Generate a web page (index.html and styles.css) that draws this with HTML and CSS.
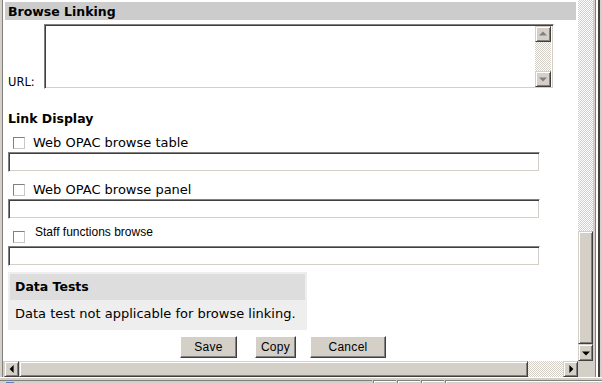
FILE: index.html
```html
<!DOCTYPE html>
<html lang="en">
<head>
    <meta charset="UTF-8">
    <title>Browse Linking</title>
    <link rel="stylesheet" href="styles.css">
</head>
<body>
    <div class="window">
        <div class="pane">
            <div class="viewport">
                <form class="page">
                    <h2 class="section-head">Browse Linking</h2>

                    <div class="url-row">
                        <label class="url-label" for="url">URL:</label>
                        <div class="url-box">
                            <textarea id="url" name="url"></textarea>
                            <div class="mini-scroll">
                                <span class="arrow-btn up disabled"></span>
                                <span class="checker"></span>
                                <span class="arrow-btn down disabled"></span>
                            </div>
                        </div>
                    </div>

                    <h3 class="sub-head">Link Display</h3>

                    <div class="option">
                        <label class="check-row">
                            <input type="checkbox" name="opac_table">
                            <span>Web OPAC browse table</span>
                        </label>
                        <input type="text" class="field" name="opac_table_text">
                    </div>

                    <div class="option">
                        <label class="check-row">
                            <input type="checkbox" name="opac_panel">
                            <span>Web OPAC browse panel</span>
                        </label>
                        <input type="text" class="field" name="opac_panel_text">
                    </div>

                    <div class="option option-staff">
                        <label class="check-row">
                            <input type="checkbox" name="staff">
                            <span>Staff functions browse</span>
                        </label>
                        <input type="text" class="field" name="staff_text">
                    </div>

                    <div class="tests">
                        <div class="tests-head">Data Tests</div>
                        <p class="tests-body">Data test not applicable for browse linking.</p>
                    </div>

                    <div class="actions">
                        <button type="button" class="btn btn-save">Save</button>
                        <button type="button" class="btn btn-copy">Copy</button>
                        <button type="button" class="btn btn-cancel">Cancel</button>
                    </div>
                </form>

                <div class="vscroll">
                    <span class="checker"></span>
                    <span class="thumb"></span>
                    <span class="arrow-btn down"></span>
                </div>
            </div>

            <div class="hscroll">
                <span class="arrow-btn left"></span>
                <span class="thumb"></span>
                <span class="checker"></span>
                <span class="arrow-btn right"></span>
                <span class="corner"></span>
            </div>
        </div>
        <div class="frame-right"></div>
    </div>

    <div class="statusbar">
        <div class="status-main"><span class="status-icon"></span></div>
        <div class="status-cell"></div>
        <div class="status-cell"></div>
        <div class="status-cell"></div>
        <div class="status-cell status-last"></div>
    </div>
</body>
</html>
```

FILE: styles.css
```css
:root {
    --face: #d4d0c8;
    --shadow: #808080;
    --dark: #404040;
    --text: #000;
}

* {
    margin: 0;
    padding: 0;
    box-sizing: border-box;
}

body {
    width: 602px;
    height: 383px;
    overflow: hidden;
    background: #fff;
    font-family: "DejaVu Sans", Verdana, sans-serif;
    font-size: 13px;
    color: var(--text);
}

/* Window frame */
.window {
    display: flex;
    height: 377px;
    padding-left: 2px;
    background: var(--face);
}

.pane {
    flex: 1;
    display: flex;
    flex-direction: column;
    border-left: 1px solid var(--shadow);
    background: #fff;
}

.viewport {
    display: flex;
    height: 361px;
}

.frame-right {
    width: 9px;
    background: linear-gradient(to right,
        var(--face) 0 2px,
        var(--shadow) 2px 3px,
        #fff 3px 5px,
        var(--dark) 5px 7px,
        var(--face) 7px);
}

/* Page content */
.page {
    flex: 1;
    padding: 0 2px 0 5px;
    overflow: hidden;
}

.section-head {
    margin: 2px 0 0 -3px;
    padding-left: 3px;
    height: 18px;
    line-height: 20px;
    overflow: hidden;
    background: #cccccc;
    font-size: 12.5px;
    font-weight: bold;
}

.url-row {
    display: flex;
    align-items: flex-end;
    margin-top: 4px;
}

.url-label {
    width: 36px;
    font-size: 11.5px;
    line-height: 14px;
}

.url-box,
.field {
    border: 1px solid;
    border-color: var(--shadow) #fff #fff var(--shadow);
    box-shadow: inset 1px 1px var(--dark), inset -1px -1px var(--face);
    background: #fff;
}

.url-box {
    display: flex;
    width: 510px;
    height: 65px;
    padding: 1px;
}

.url-box textarea {
    flex: 1;
    border: none;
    resize: none;
    outline: none;
    overflow: hidden;
    font: inherit;
}

.mini-scroll {
    display: flex;
    flex-direction: column;
    width: 16px;
    margin-right: 1px;
}

.checker {
    flex: 1;
    background: repeating-conic-gradient(var(--face) 0 25%, #fff 0 50%) 0 0 / 2px 2px;
}

.arrow-btn {
    position: relative;
    display: block;
    flex: none;
    width: 16px;
    height: 16px;
    background: var(--face);
    border: 1px solid;
    border-color: var(--face) var(--dark) var(--dark) var(--face);
    box-shadow: inset 1px 1px #fff, inset -1px -1px var(--shadow);
}

.arrow-btn::before {
    content: "";
    position: absolute;
    left: 50%;
    top: 50%;
    width: 0;
    height: 0;
    border: 4px solid transparent;
}

.arrow-btn.up::before {
    border-bottom-color: var(--text);
    border-top-width: 0;
    transform: translate(-50%, -60%);
}

.arrow-btn.down::before {
    border-top-color: var(--text);
    border-bottom-width: 0;
    transform: translate(-50%, -40%);
}

.arrow-btn.left::before {
    border-right-color: var(--text);
    border-left-width: 0;
    transform: translate(-60%, -50%);
}

.arrow-btn.right::before {
    border-left-color: var(--text);
    border-right-width: 0;
    transform: translate(-40%, -50%);
}

.arrow-btn.disabled.up::before {
    border-bottom-color: var(--shadow);
}

.arrow-btn.disabled.down::before {
    border-top-color: var(--shadow);
}

.sub-head {
    margin-top: 22px;
    font-size: 12.5px;
    font-weight: bold;
    line-height: 15px;
}

/* Link display options */
.option {
    margin-top: 10px;
}

.sub-head + .option {
    margin-top: 9px;
}

.check-row {
    display: flex;
    align-items: flex-start;
    line-height: 16px;
}

.check-row input {
    appearance: none;
    flex: none;
    width: 12px;
    height: 12px;
    margin: 2px 8px 0 5px;
    border: 1px solid;
    border-color: var(--shadow) #c8c8c8 #c8c8c8 var(--shadow);
    background: #fff;
}

.field {
    display: block;
    width: 532px;
    height: 20px;
    margin-top: 1px;
    padding: 0 3px;
    outline: none;
    font: inherit;
}

.option-staff {
    margin-top: 6px;
}

.option-staff .check-row {
    font-family: "Liberation Sans", Arial, sans-serif;
    font-size: 12px;
    line-height: 14px;
}

.option-staff .check-row input {
    margin: 6px 10px 0 5px;
}

.option-staff .field {
    margin-top: 3px;
}

/* Data tests */
.tests {
    width: 299px;
    margin-top: 6px;
    padding: 2px;
    background: #eeeeee;
}

.tests-head {
    padding-left: 5px;
    background: #dddddd;
    font-size: 12.5px;
    font-weight: bold;
    line-height: 26px;
}

.tests-body {
    padding-left: 5px;
    line-height: 28px;
}

/* Buttons */
.actions {
    display: flex;
    margin-top: 6px;
    padding-left: 172px;
}

.btn {
    height: 22px;
    background: var(--face);
    border: 1px solid;
    border-color: #fff var(--dark) var(--dark) #fff;
    box-shadow: inset -1px -1px var(--shadow);
    font-family: "Liberation Sans", Arial, sans-serif;
    font-size: 12px;
    letter-spacing: 0.3px;
    color: var(--text);
}

.btn-save {
    width: 57px;
}

.btn-copy {
    width: 41px;
    margin-left: 18px;
}

.btn-cancel {
    width: 76px;
    margin-left: 14px;
}

/* Scrollbars */
.vscroll {
    display: flex;
    flex-direction: column;
    width: 15px;
}

.vscroll .thumb,
.hscroll .thumb {
    display: block;
    flex: none;
    background: var(--face);
    border: 1px solid;
    border-color: var(--face) var(--dark) var(--dark) var(--face);
    box-shadow: inset 1px 1px #fff, inset -1px -1px var(--shadow);
}

.vscroll .thumb {
    height: 113px;
}

.vscroll .arrow-btn {
    width: 15px;
    height: 17px;
}

.hscroll {
    display: flex;
    height: 16px;
    padding-left: 1px;
    background: var(--face);
}

.hscroll .arrow-btn {
    width: 15px;
}

.hscroll .thumb {
    width: 509px;
}

.corner {
    width: 15px;
    background: var(--face);
}

/* Status bar */
.statusbar {
    display: flex;
    height: 6px;
    border-top: 1px solid #fff;
    padding-top: 2px;
    background: var(--face);
}

.status-main,
.status-cell {
    border-top: 1px solid var(--shadow);
    border-left: 1px solid var(--shadow);
    box-shadow: inset 1px 1px #fff;
}

.status-main {
    flex: 1;
    padding-left: 6px;
    border-left: none;
    box-shadow: none;
}

.status-icon {
    display: block;
    width: 8px;
    height: 3px;
    margin-top: 1px;
    background: #5b7fc0;
}

.status-cell {
    width: 23px;
    margin-left: 1px;
}

.status-last {
    width: 157px;
}
```
